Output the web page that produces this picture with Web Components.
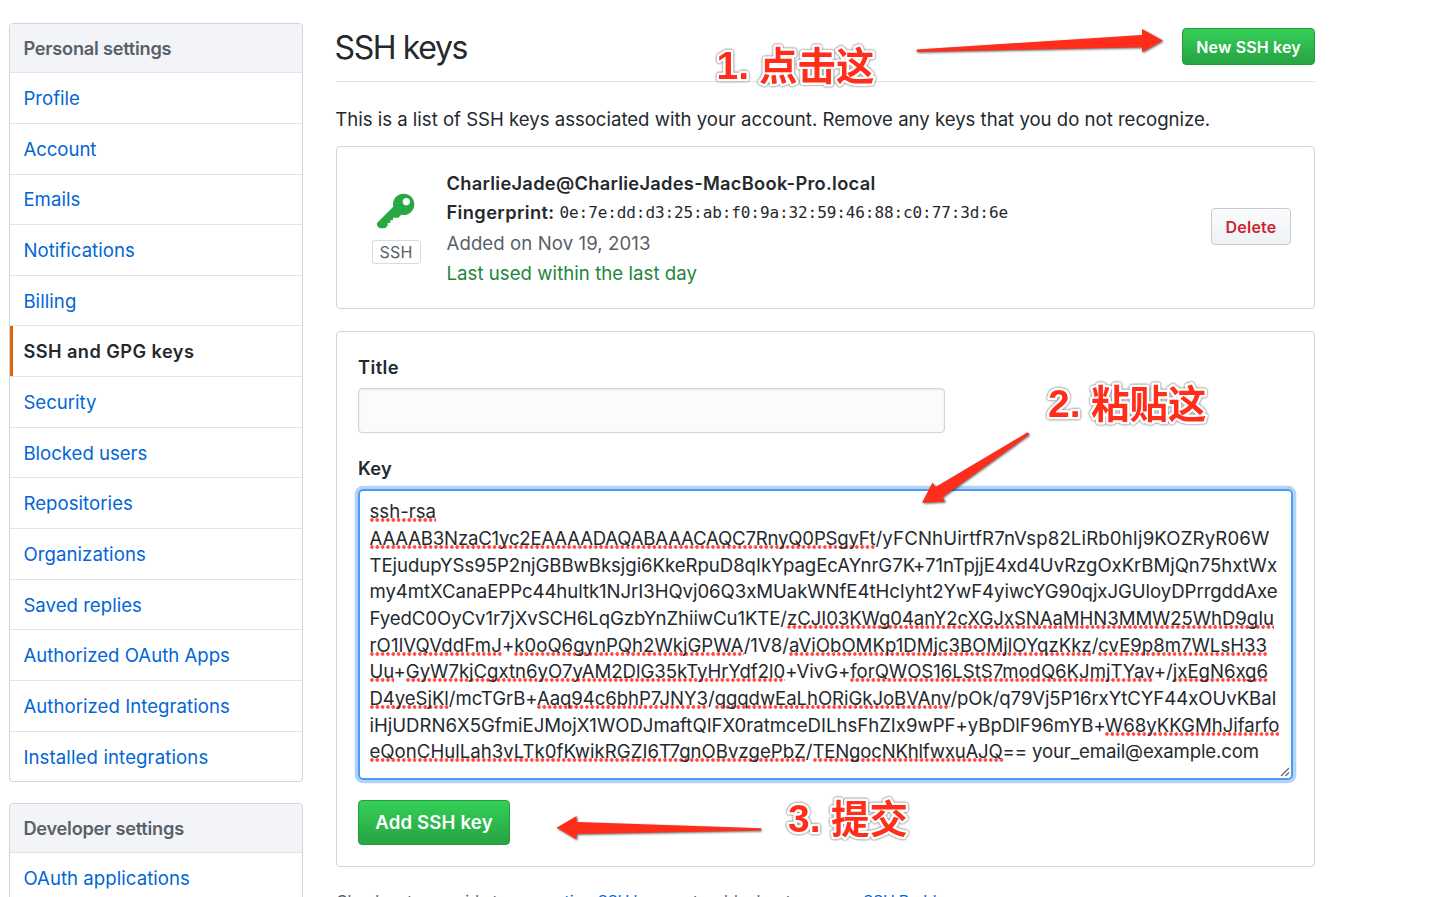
<!DOCTYPE html>
<html lang="en">
<head>
<meta charset="utf-8">
<title>SSH keys</title>
<style>
html,body{margin:0;height:100%;overflow:hidden;background:#fff}
body{font-family:Inter,"Noto Sans CJK SC",sans-serif;font-size:18.6px;line-height:28px;color:#24292e;position:relative}
</style>
</head>
<body>
<settings-page>
  <settings-menu slot="menu">
    <fit-text slot="heading" w="148">Personal settings</fit-text>
    <menu-item><fit-text w="56.5">Profile</fit-text></menu-item>
    <menu-item><fit-text w="73">Account</fit-text></menu-item>
    <menu-item><fit-text w="57">Emails</fit-text></menu-item>
    <menu-item><fit-text w="111.5">Notifications</fit-text></menu-item>
    <menu-item><fit-text w="53">Billing</fit-text></menu-item>
    <menu-item selected><fit-text w="171">SSH and GPG keys</fit-text></menu-item>
    <menu-item><fit-text w="73">Security</fit-text></menu-item>
    <menu-item><fit-text w="124">Blocked users</fit-text></menu-item>
    <menu-item><fit-text w="109.5">Repositories</fit-text></menu-item>
    <menu-item><fit-text w="122.5">Organizations</fit-text></menu-item>
    <menu-item><fit-text w="118.5">Saved replies</fit-text></menu-item>
    <menu-item><fit-text w="206.5">Authorized OAuth Apps</fit-text></menu-item>
    <menu-item><fit-text w="206.5">Authorized Integrations</fit-text></menu-item>
    <menu-item><fit-text w="185">Installed integrations</fit-text></menu-item>
  </settings-menu>
  <settings-menu slot="menu">
    <fit-text slot="heading" w="160.5">Developer settings</fit-text>
    <menu-item><fit-text w="166.5">OAuth applications</fit-text></menu-item>
  </settings-menu>

  <page-heading>
    <fit-text w="132.5">SSH keys</fit-text>
    <push-button slot="action" kind="primary"><fit-text w="104.5">New SSH key</fit-text></push-button>
  </page-heading>
  <intro-text><fit-text w="875">This is a list of SSH keys associated with your account. Remove any keys that you do not recognize.</fit-text></intro-text>
  <key-card>
    <fit-text slot="name" w="429">CharlieJade@CharlieJades-MacBook-Pro.local</fit-text>
    <fit-text slot="label" w="108">Fingerprint:</fit-text>
    <fit-text slot="print" w="448.5">0e:7e:dd:d3:25:ab:f0:9a:32:59:46:88:c0:77:3d:6e</fit-text>
    <fit-text slot="added" w="204">Added on Nov 19, 2013</fit-text>
    <fit-text slot="used" w="250.5">Last used within the last day</fit-text>
    <push-button slot="action" kind="danger"><fit-text w="51">Delete</fit-text></push-button>
  </key-card>
  <key-form>
    <fit-text slot="title" w="41">Title</fit-text>
    <fit-text slot="key" w="34">Key</fit-text>
    <key-area>
      <fit-text w="66.5"><spell-error>ssh-rsa</spell-error></fit-text>
      <fit-text w="900"><fit-text w="506"><spell-error>AAAAB3NzaC1yc2EAAAADAQABAAACAQC7RnyQ0PSgyFt</spell-error></fit-text><fit-text w="394">/yFCNhUirtfR7nVsp82LiRb0hIj9KOZRyR06W</fit-text></fit-text>
      <fit-text w="907.5">TEjudupYSs95P2njGBBwBksjgi6KkeRpuD8qIkYpagEcAYnrG7K+71nTpjjE4xd4UvRzgOxKrBMjQn75hxtWx</fit-text>
      <fit-text w="908">my4mtXCanaEPPc44hultk1NJrI3HQvj06Q3xMUakWNfE4tHcIyht2YwF4yiwcYG90qjxJGUloyDPrrgddAxe</fit-text>
      <fit-text w="904.5">FyedC0OyCv1r7jXvSCH6LqGzbYnZhiiwCu1KTE/<spell-error>zCJI03KWg04anY2cXGJxSNAaMHN3MMW25WhD9gIu</spell-error></fit-text>
      <fit-text w="897.5"><fit-text w="132.5"><spell-error>rO1lVQVddFmJ</spell-error></fit-text><fit-text w="765">+<spell-error>k0oQ6gynPQh2WkjGPWA</spell-error>/1V8/<spell-error>aViObOMKp1DMjc3BOMjlOYqzKkz</spell-error>/<spell-error>cvE9p8m7WLsH33</spell-error></fit-text></fit-text>
      <fit-text w="898.5"><spell-error>Uu</spell-error>+<spell-error>GyW7kjCgxtn6yO7yAM2DlG35kTyHrYdf2l0</spell-error>+VivG+<spell-error>forQWOS16LStS7modQ6KJmjTYav</spell-error>+/<spell-error>jxEgN6xg6</spell-error></fit-text>
      <fit-text w="907"><spell-error>D4yeSjKl</spell-error>/mcTGrB+<spell-error>Aaq94c6bhP7JNY3</spell-error>/<spell-error>qgqdwEaLhORiGkJoBVAnv</spell-error>/pOk/q79Vj5P16rxYtCYF44xOUvKBaI</fit-text>
      <fit-text w="910">iHjUDRN6X5GfmiEJMojX1WODJmaftQIFX0ratmceDILhsFhZIx9wPF+yBpDlF96mYB+<spell-error>W68yKKGMhJifarfo</spell-error></fit-text>
      <fit-text w="889.5"><fit-text w="443"><spell-error>eQonCHulLah3vLTk0fKwikRGZI6T7gnOBvzgePbZ</spell-error>/</fit-text><fit-text w="190"><spell-error>TENgocNKhlfwxuAJQ</spell-error></fit-text><fit-text w="256.5">== your_email@example.com</fit-text></fit-text>
    </key-area>
    <push-button slot="submit" kind="primary large"><fit-text w="117.5">Add SSH key</fit-text></push-button>
  </key-form>
  <help-note>
    <fit-text w="175.5">Check out our guide to </fit-text><help-link><fit-text w="86">generating </fit-text><fit-text w="70">SSH keys</fit-text></help-link><fit-text w="128.5"> or troubleshoot </fit-text><help-link><fit-text w="67">common </fit-text><fit-text w="104">SSH Problems</fit-text></help-link>.
  </help-note>
</settings-page>
<guide-marks></guide-marks>

<script>
function component(name, html) {
  const tpl = document.createElement('template');
  tpl.innerHTML = html;
  customElements.define(name, class extends HTMLElement {
    constructor() {
      super();
      this.attachShadow({mode: 'open'}).append(tpl.content.cloneNode(true));
    }
  });
}

component('settings-page', `<style>
:host{display:grid;grid-template-columns:294px 979px;column-gap:33px;padding:23px 0 0 9px;align-items:start}
aside{display:flex;flex-direction:column;gap:20.6px}
main{display:flex;flex-direction:column}
</style><aside><slot name="menu"></slot></aside><main><slot></slot></main>`);

component('settings-menu', `<style>
:host{display:block;box-sizing:border-box;border:1px solid #d1d5da;border-radius:4px;overflow:hidden;background:#fff}
header{box-sizing:border-box;height:48.2px;padding:0 13.4px;display:flex;align-items:center;background:#f3f4f8;color:#586069;font-weight:600;font-size:18.2px}
</style><header><slot name="heading"></slot></header><slot></slot>`);

component('menu-item', `<style>
:host{display:flex;align-items:center;box-sizing:border-box;height:50.67px;padding:0 13.4px;border-top:1px solid #e1e4e8;color:#0366d6}
:host([selected]){color:#24292e;font-weight:600;font-size:18.2px;box-shadow:inset 3px 0 #e36209}
</style><slot></slot>`);

component('page-heading', `<style>
:host{display:flex;justify-content:space-between;box-sizing:border-box;height:59px;border-bottom:1px solid #e1e4e8;font-size:32px;line-height:49px}
::slotted(fit-text){margin-left:-1.5px}
.act{padding-top:5px;line-height:24px}
</style><slot></slot><div class="act"><slot name="action"></slot></div>`);

component('push-button', `<style>
:host{display:flex;align-items:center;justify-content:center;box-sizing:border-box;border-radius:4px;font-size:16px;line-height:24px;font-weight:600}
:host([kind~=primary]){width:133px;height:37px;color:#fff;background:linear-gradient(#34d058,#28a745 90%);border:1px solid #239a3e}
:host([kind~=large]){width:152px;height:45px;font-size:18.6px}
:host([kind~=danger]){width:80px;height:37px;color:#cb2431;background:linear-gradient(#fafbfc,#eff3f6 90%);border:1px solid #c9cccf}
</style><slot></slot>`);

component('intro-text', `<style>:host{display:block;padding:22.5px 0 13px}::slotted(*){margin-left:-.8px}</style><slot></slot>`);

component('key-card', `<style>
:host{display:flex;align-items:center;box-sizing:border-box;height:163px;border:1px solid #d1d5da;border-radius:4px;padding:0 23px 0 34px}
.icon{width:50px;display:flex;flex-direction:column;align-items:center;gap:7px;padding-top:1px}
.tag{box-sizing:border-box;width:49px;height:24px;border:1px solid #d8dbdf;border-radius:3px;text-align:center;font-size:16px;line-height:22px;color:#586069}
.info{flex:1;padding:.5px 0 0 25.5px;display:grid;row-gap:1.7px}
.name,.fp b{font-weight:600;font-size:18.3px}
.name{padding-top:.6px}
.fp{display:flex;gap:5px}
.mono{font-family:"DejaVu Sans Mono",monospace;font-size:16px;padding-top:1px}
.muted{color:#586069}.ok{color:#22863a}
.act{margin-top:-1px}
svg{display:block}
</style>
<div class="icon"><svg width="37.3" height="42.7" viewBox="0 0 14 16" fill="#28a745"><path d="M12.83 2.17C12.08 1.42 11.14 1.03 10 1c-1.13.03-2.08.42-2.83 1.17S6.04 3.86 6.01 5c0 .3.03.59.09.89L0 12v1l1 1h2l1-1v-1h1v-1h1v-1h2l1.09-1.11c.3.08.59.11.91.11 1.14-.03 2.08-.42 2.83-1.17S13.97 6.14 14 5c-.03-1.14-.42-2.08-1.17-2.83zM11 5.38c-.77 0-1.38-.61-1.38-1.38 0-.77.61-1.38 1.38-1.38.77 0 1.38.61 1.38 1.38 0 .77-.61 1.38-1.38 1.38z"/></svg><div class="tag"><fit-text w="33">SSH</fit-text></div></div>
<div class="info"><div class="name"><slot name="name"></slot></div><div class="fp"><b><slot name="label"></slot></b><span class="mono"><slot name="print"></slot></span></div><div class="muted"><slot name="added"></slot></div><div class="ok"><slot name="used"></slot></div></div>
<div class="act"><slot name="action"></slot></div>`);

component('key-form', `<style>
:host{display:block;box-sizing:border-box;height:536px;margin-top:22px;border:1px solid #d1d5da;border-radius:4px;padding:21px 21px 0}
.label{font-weight:600;font-size:18.3px;height:28px}
.input{box-sizing:border-box;width:586.5px;height:45px;margin:7px 0 21px;border:1px solid #d1d5da;border-radius:4px;background:#fafbfc;box-shadow:inset 0 1px 2px rgba(27,31,35,.075)}
.submit{display:flex;margin-top:20px}
</style><div class="label"><slot name="title"></slot></div><div class="input"></div><div class="label"><slot name="key"></slot></div><slot></slot><div class="submit"><slot name="submit"></slot></div>`);

component('key-area', `<style>
:host{display:flex;flex-direction:column;align-items:flex-start;position:relative;box-sizing:border-box;height:291px;margin-top:7px;border:2px solid #4a9bf5;border-radius:5px;box-shadow:0 0 0 3.3px #b3d3f5;padding:7.7px 9.5px;line-height:26.67px}
svg{position:absolute;right:1px;bottom:1px}
</style><slot></slot><svg width="10" height="10" viewBox="0 0 10 10" stroke="#666" stroke-width="1.2"><path d="M1 9L9 1M5.5 9L9 5.5"/></svg>`);

component('spell-error', `<style>
:host{background:radial-gradient(circle at 2px 2px,#ff4a40 1.5px,transparent 2.1px) 0 100%/5.33px 4px repeat-x}
</style><slot></slot>`);

component('help-note', `<style>:host{display:block;margin-top:22px;font-size:16px;line-height:24px;color:#586069;white-space:nowrap;height:24px}</style><slot></slot>`);
component('help-link', `<style>:host{color:#0366d6}</style><slot></slot>`);

component('guide-marks', `<style>
:host{position:absolute;left:0;top:0;width:1440px;height:897px;pointer-events:none}
svg{display:block}
.arrow{fill:#ff2d1a;filter:drop-shadow(1px 1.5px 1px rgba(0,0,0,.6))}
text{fill:#ff2d1a;stroke:#fff;stroke-width:5px;stroke-linejoin:round;paint-order:stroke;font:700 39px "Liberation Sans","Noto Sans CJK SC",sans-serif}
.cjk{font-family:"Noto Sans CJK SC",sans-serif;font-size:38.5px}
.words{filter:drop-shadow(0 0 1px rgba(0,0,0,.5)) drop-shadow(0 0 .5px rgba(0,0,0,.35))}
</style><svg width="1440" height="897" viewBox="0 0 1440 897">
<g class="arrow"><path d="M916.7 49.5L1142 35V29L1162.8 40.5L1142 52.3V47.3L916.7 52z"/><path d="M1027.7 432.3L935.5 487L932.5 482.5L922 502.8L945 501.7L942.5 497L1029.2 434.5z"/><path d="M761 828.3L576.6 822V816L556.5 827.7L576.6 839.5V834L761 830.5z"/></g>
<g class="words"><text x="716.5" y="79">1. <tspan class="cjk" x="759" y="79.5">点击这</tspan></text><text x="1048" y="417.3">2. <tspan class="cjk" x="1091" y="417.5">粘贴这</tspan></text><text x="788" y="832.3">3. <tspan class="cjk" x="831" y="832.5">提交</tspan></text></g>
</svg>`);

/* A run of text set to the width w by spreading the difference over its letters. */
customElements.define('fit-text', class extends HTMLElement {
  constructor() {
    super();
    this.attachShadow({mode: 'open'}).innerHTML = '<style>:host{display:inline-block;white-space:pre}</style><slot></slot>';
  }
  connectedCallback() {
    if (this.querySelector('fit-text')) return;
    this.style.letterSpacing = '0';
    const width = this.getBoundingClientRect().width;
    const n = [...this.textContent].length;
    this.style.letterSpacing = ((this.getAttribute('w') - width) / n).toFixed(4) + 'px';
  }
});
</script>
</body>
</html>
